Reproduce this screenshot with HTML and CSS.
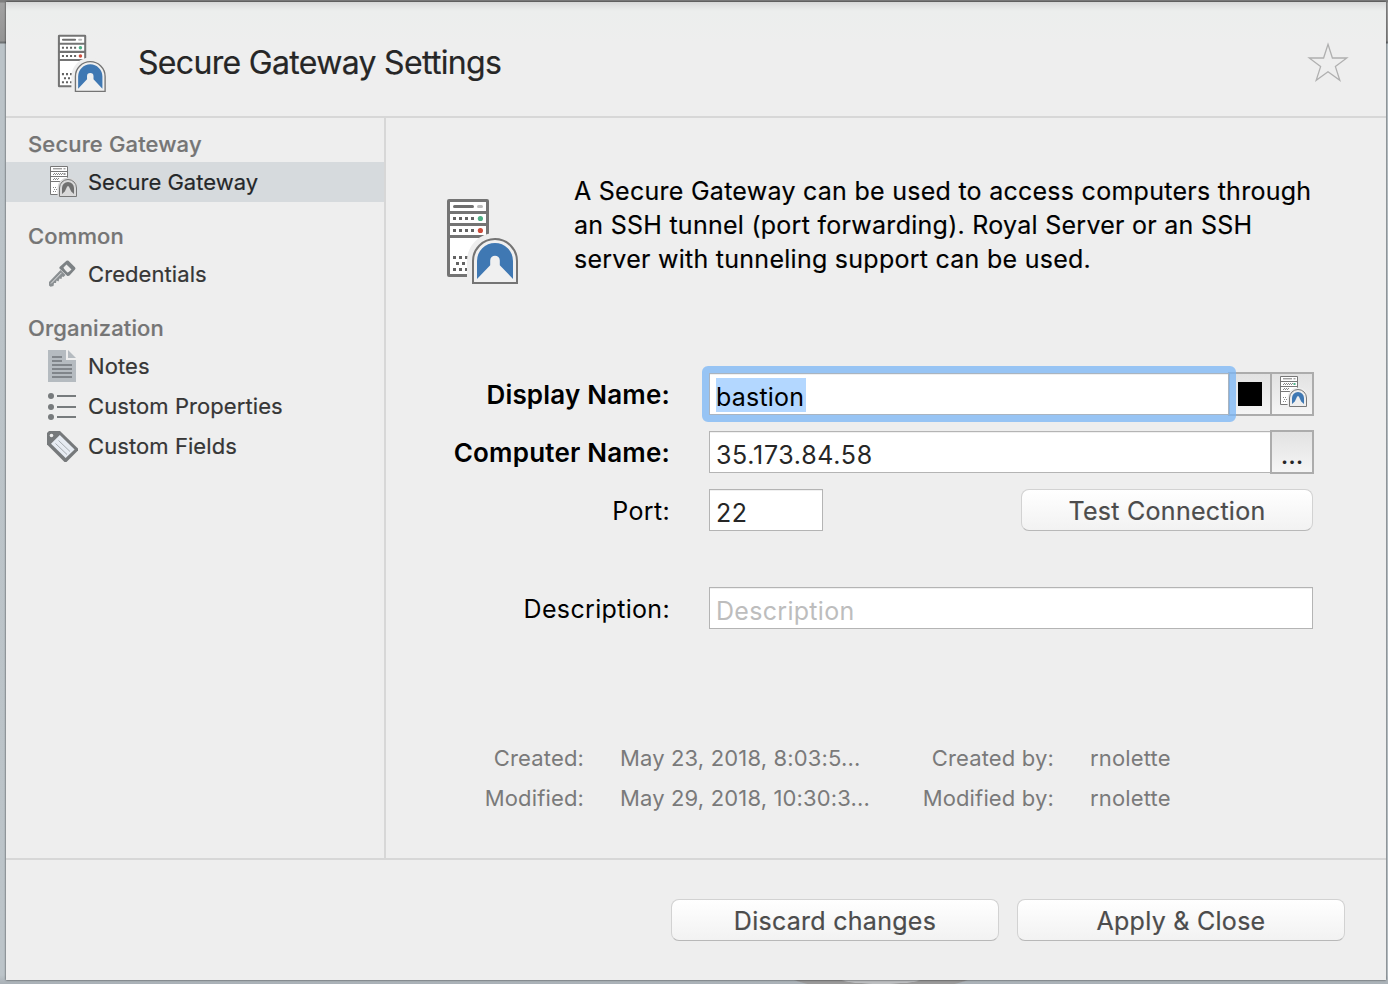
FILE: index.html
```html
<!DOCTYPE html>
<html lang="en">
<head>
<meta charset="utf-8">
<title>Secure Gateway Settings</title>
<link rel="stylesheet" href="styles.css">
</head>
<body>
<svg class="defs" width="0" height="0">
  <symbol id="gateway" viewBox="0 0 72 86">
    <rect x="2.5" y="2.5" width="39" height="75" rx="0.5" fill="#fff" stroke="#747474" stroke-width="3"/>
    <path d="M2 14.5H42M2 26.5H42M2 38.5H42" stroke="#747474" stroke-width="3"/>
    <path d="M8.5 8.5H26.5" stroke="#6e6e6e" stroke-width="3" stroke-linecap="round"/>
    <path d="M32.5 8.5H35.5" stroke="#b9b9b9" stroke-width="3" stroke-linecap="round"/>
    <path d="M7 20.5H28M7 32.5H28M7 59.5H22M7 71.5H22" stroke="#636363" stroke-width="3" stroke-dasharray="3 3"/>
    <path d="M10 65.5H22" stroke="#636363" stroke-width="3" stroke-dasharray="3 3"/>
    <circle cx="34.4" cy="20.5" r="2.6" fill="#4caf85"/>
    <circle cx="34.4" cy="32.5" r="2.6" fill="#cd4b3a"/>
    <path d="M27 85V63a22 22 0 0 1 44 0V85Z" fill="#eee" stroke="#eee" stroke-width="12"/>
    <path d="M27 85V63a22 22 0 0 1 44 0V85Z" fill="#f0f0f0" stroke="#747474" stroke-width="2"/>
    <path d="M31 81V63a18 18 0 0 1 36 0V81L53.800 67.200V62.500a4.300 4.300 0 0 0-9.600 0V67.200Z" fill="#3f78b3"/>
  </symbol>
  <symbol id="gateway-small" viewBox="0 0 27 31">
    <path d="M.5 .5H17.5V28.5H.5Z" class="gs-case"/>
    <path d="M.5 5.5H17.5M.5 10.5H17.5M.5 15.5H17.5" class="gs-line"/>
    <path d="M3 2.8H12" class="gs-line"/>
    <path d="M13.5 2.8H15.5" class="gs-line"/>
    <path d="M3 8.5H12M3 13.5H9M3 21.5H7M3 25.5H7" class="gs-dots"/>
    <path d="M4 7.5H13M4 12.5H10M4 23.5H7" class="gs-dots"/>
    <rect x="13.5" y="7" width="2" height="2" class="gs-led"/>
    <path d="M9.500 30.500V22a8.500 8.500 0 0 1 17 0V30.500Z" class="gs-halo"/>
    <path d="M9.500 30.500V22a8.500 8.500 0 0 1 17 0V30.500Z" class="gs-dome"/>
    <path d="M12 28V22a6 6 0 0 1 12 0V28L21.200 25.500L19.300 21.500a1.300 1.300 0 0 0-2.600 0L14.800 25.500Z" class="gs-fill"/>
  </symbol>
</svg>

<div class="window">
  <header class="header">
    <svg class="header-icon"><use href="#gateway"/></svg>
    <h1 class="title">Secure Gateway Settings</h1>
    <svg class="star" viewBox="0 0 42 40"><path d="M21 2.3L25.4 16H39.8L28.4 24.6L32.8 38.3L21 29.8L9.2 38.3L13.6 24.6L2.2 16H16.6Z"/></svg>
  </header>

  <div class="body">
    <nav class="sidebar">
      <div class="group">Secure Gateway</div>
      <div class="item selected"><svg class="icon-gateway mono" viewBox="0 0 27 31"><use href="#gateway-small"/></svg><span>Secure Gateway</span></div>
      <div class="group spaced">Common</div>
      <div class="item">
        <svg class="icon-key" viewBox="0 0 28 28">
          <path d="M18.500.8Q19.500 0 20.500.8L27 7.300Q28 8.500 27 9.500L21.500 15.600Q20 16.500 18.800 15.500L11.500 8.500Q11 7.500 11.800 6.700ZM18.500 4.500L15.500 7.500Q15.500 8.500 19.500 12.500Q20.500 12.500 23.500 9.500Z" fill="#7d8285" fill-rule="evenodd"/>
          <path d="M12.500 10L17.500 15L15.500 17L14 16.500L13.500 19L11.500 18.500L10.500 21.500L8.500 20.500L8 23L6 23L5.500 26L2.500 26.800L1 25.500V22Z" fill="#8a8f92"/>
          <path d="M3 23.500L13.500 12.800" stroke="#e2e3e4" stroke-width="1"/>
        </svg><span>Credentials</span></div>
      <div class="group spaced">Organization</div>
      <div class="item">
        <svg class="icon-notes" viewBox="0 0 28 32">
          <path d="M0 0H18V10H28V32H0Z" fill="#b5bbc0"/><path d="M20 0L28 8H20Z" fill="#b5bbc0"/>
          <path d="M4 7H14M4 11H14M4 15H24M4 19H24M4 23H24M4 27H24" stroke="#80858a" stroke-width="2"/>
        </svg><span>Notes</span></div>
      <div class="item">
        <svg class="icon-list" viewBox="0 0 28 28">
          <path d="M9 4H28M9 15H28M9 25H28" stroke="#777b7d" stroke-width="2"/>
          <g fill="#777b7d"><circle cx="3" cy="4" r="3"/><circle cx="3" cy="15" r="3"/><circle cx="3" cy="25" r="3"/></g>
        </svg><span>Custom Properties</span></div>
      <div class="item">
        <svg class="icon-tag" viewBox="0 0 31 31">
          <path d="M2 0H13L31 17.500V19.500L19.500 31H17.500L0 13.500V2Z" fill="#76797b"/>
          <path d="M12.800 4L27.600 18.600L18.600 27L4 12.800Z" fill="#e6ebf2"/>
          <path d="M11.500 9.500L23 20.500M8.500 12.500L20 23.500" stroke="#a6abb0" stroke-width="1"/>
          <circle cx="4.500" cy="4.500" r="1.800" fill="#eee"/>
        </svg><span>Custom Fields</span></div>
    </nav>

    <main class="content">
      <section class="intro">
        <svg class="intro-icon"><use href="#gateway"/></svg>
        <p class="intro-text">A Secure Gateway can be used to access computers through<br>an SSH tunnel (port forwarding). Royal Server or an SSH<br>server with tunneling support can be used.</p>
      </section>

      <section class="form">
        <label class="label bold">Display Name:</label>
        <div class="row">
          <div class="input focused"><span class="selection">bastion</span></div>
          <div class="square swatch"><i class="chip"></i></div>
          <div class="square picker"><svg class="icon-gateway" viewBox="0 0 27 31"><use href="#gateway-small"/></svg></div>
        </div>
        <label class="label bold">Computer Name:</label>
        <div class="row">
          <div class="input address">35.173.84.58</div>
          <div class="square more">...</div>
        </div>
        <label class="label">Port:</label>
        <div class="row split">
          <div class="input port">22</div>
          <div class="button test">Test Connection</div>
        </div>
        <label class="label gap">Description:</label>
        <div class="row gap">
          <div class="input placeholder">Description</div>
        </div>
      </section>

      <section class="meta">
        <span class="key">Created:</span><span class="value">May 23, 2018, 8:03:5...</span><span class="key">Created by:</span><span class="value">rnolette</span>
        <span class="key">Modified:</span><span class="value">May 29, 2018, 10:30:3...</span><span class="key">Modified by:</span><span class="value">rnolette</span>
      </section>
    </main>
  </div>

  <footer class="footer">
    <div class="button wide">Discard changes</div>
    <div class="button wide">Apply &amp; Close</div>
  </footer>
</div>
</body>
</html>
```
FILE: styles.css
```css
* { box-sizing: border-box; }
html, body { height: 100%; }
body {
  margin: 0;
  padding: 2px 2px 4px 6px;
  overflow: hidden;
  font-family: Inter, "Liberation Sans", sans-serif;
  background:
    radial-gradient(ellipse 40px 4px at 881px 980px, #bdbfc1 90%, transparent) no-repeat,
    radial-gradient(ellipse 92px 14px at 881px 976px, #9a9a9a 96%, transparent) no-repeat,
    linear-gradient(#7e7e7e 0 2px, #a2a2a2 3px, #949494 41px, #6f7274 42px 43px, #bbc3c8 44px, #bcc4c9 975px, #a9b0b6 984px);
}
.defs { position: absolute; }
svg { display: block; flex: none; }
.window {
  height: 978px;
  display: flex;
  flex-direction: column;
  background: #eee;
  box-shadow: 0 0 2px rgba(0, 0, 0, .75);
}
.header {
  height: 116px;
  display: flex;
  align-items: center;
  padding: 7px 37px 0 51px;
  border-bottom: 2px solid #d7d7d7;
  background: linear-gradient(#d6d7d7, #e2e3e3 4px, #eceeed 9px, #eee 40px);
}
.header-icon { width: 49px; height: 58px; }
.title {
  margin: 0 auto 0 32px;
  font-size: 32px;
  font-weight: 400;
  letter-spacing: -.68px;
  line-height: 40px;
  color: #262626;
  -webkit-text-stroke: .2px #262626;
}
.star { width: 42px; height: 40px; margin-top: -2px; fill: none; stroke: #b0b0b0; stroke-width: 1.3; }
.body { flex: 1; display: flex; }
.sidebar {
  width: 380px;
  border-right: 2px solid #d7d7d7;
  padding-top: 8px;
  font-size: 22px;
  line-height: 36px;
}
.group { height: 36px; padding-left: 22px; color: #757575; font-weight: 500; letter-spacing: .14px; -webkit-text-stroke: .2px #757575; }
.group.spaced { margin-top: 16px; }
.item { height: 40px; display: flex; align-items: center; padding-left: 42px; color: #363636; letter-spacing: .08px; -webkit-text-stroke: .2px #363636; }
.item.selected { background: #d6dadd; color: #242729; letter-spacing: 0; }
.item span { margin-left: 12px; }
.icon-gateway { width: 27px; height: 31px; }
.item .icon-gateway { margin: -1px -1px 0 2px; }
.icon-key { width: 28px; height: 28px; }
.icon-notes { width: 28px; height: 32px; }
.icon-list { width: 28px; height: 28px; }
.icon-tag { width: 31px; height: 31px; margin: 0 -2px 0 -1px; }

.gs-case { fill: #fff; stroke: #777; }
.gs-line { fill: none; stroke: #777; }
.gs-dots { stroke: #888; stroke-dasharray: 1 1; }
.gs-led { fill: #4caf85; }
.gs-halo { fill: var(--halo, #eee); stroke: var(--halo, #eee); stroke-width: 4; }
.gs-dome { fill: var(--halo, #eee); stroke: #777; }
.gs-fill { fill: #3f78b3; }
.mono { --halo: #d6dadd; filter: grayscale(1); }

.content { flex: 1; padding: 56px 72px 0 60px; }
.intro { display: flex; height: 198px; }
.intro-icon { width: 72px; height: 86px; margin-top: 24px; }
.intro-text {
  margin: 0 0 0 56px;
  font-size: 25px;
  letter-spacing: .265px;
  line-height: 34px;
  color: #000;
  white-space: nowrap;
  -webkit-text-stroke: .15px #000;
}
.form {
  display: grid;
  grid-template-columns: 224px 606px;
  column-gap: 38px;
  row-gap: 14px;
  font-size: 25px;
}
.label { height: 44px; line-height: 47px; text-align: right; letter-spacing: .33px; color: #000; }
.label.bold { font-size: 26px; font-weight: 600; letter-spacing: .2px; line-height: 45px; }
.row { height: 44px; display: flex; align-items: center; padding-left: 1px; }
.split { justify-content: space-between; padding-right: 1px; }
.gap { margin-top: 40px; }
.input {
  flex: 1;
  height: 42px;
  border: 1px solid #b4b4b4;
  background: #fff;
  padding-left: 6px;
  line-height: 47px;
  color: #262626;
  box-shadow: inset 0 1px #f0f0f0;
}
.input.focused { position: relative; z-index: 1; border-color: #a9b4c0; letter-spacing: .2px; }
.input.focused::after {
  content: "";
  position: absolute;
  inset: -8px;
  border: 7px solid rgba(122, 181, 245, .75);
  border-radius: 6px;
}
.selection {
  display: inline-block;
  width: 90px;
  height: 34px;
  margin-top: 4px;
  line-height: 38px;
  vertical-align: top;
  background: #b3d7ff;
  color: #000;
}
.input.address { letter-spacing: .68px; }
.input.port { flex: none; width: 114px; letter-spacing: .4px; }
.input.placeholder { color: #bdbdbd; margin-right: 1px; letter-spacing: .3px; }
.square {
  width: 44px;
  height: 44px;
  flex: none;
  border: 2px solid #acacac;
  background: linear-gradient(#e2e2e2, #f5f5f5);
  display: flex;
  justify-content: center;
}
.swatch { margin-left: -1px; align-items: center; }
.chip { width: 24px; height: 24px; background: #000; }
.picker { margin-left: -2px; padding: 2px 0 0 2px; }
.more { margin-left: -1px; line-height: 47px; color: #262626; font-weight: 500; }
.button {
  height: 42px;
  border: 1px solid #d2d2d2;
  border-bottom-color: #b8b8b8;
  border-radius: 8px;
  background: linear-gradient(#fff, #f2f2f2);
  text-align: center;
  font-size: 25px;
  letter-spacing: .28px;
  line-height: 43px;
  color: #4c4c4c;
  -webkit-text-stroke: .2px #4c4c4c;
}
.test { width: 292px; }
.meta {
  display: grid;
  grid-template-columns: 138px 274px 196px auto;
  grid-auto-rows: 40px;
  margin-top: 108px;
  font-size: 22px;
  letter-spacing: .15px;
  line-height: 40px;
  color: #7a7a7a;
  white-space: nowrap;
}
.key { text-align: right; }
.value { margin-left: 36px; }
.footer {
  height: 122px;
  border-top: 2px solid #d7d7d7;
  padding: 39px 41px 0 0;
  display: flex;
  justify-content: flex-end;
  gap: 18px;
}
.wide { width: 328px; }
```
